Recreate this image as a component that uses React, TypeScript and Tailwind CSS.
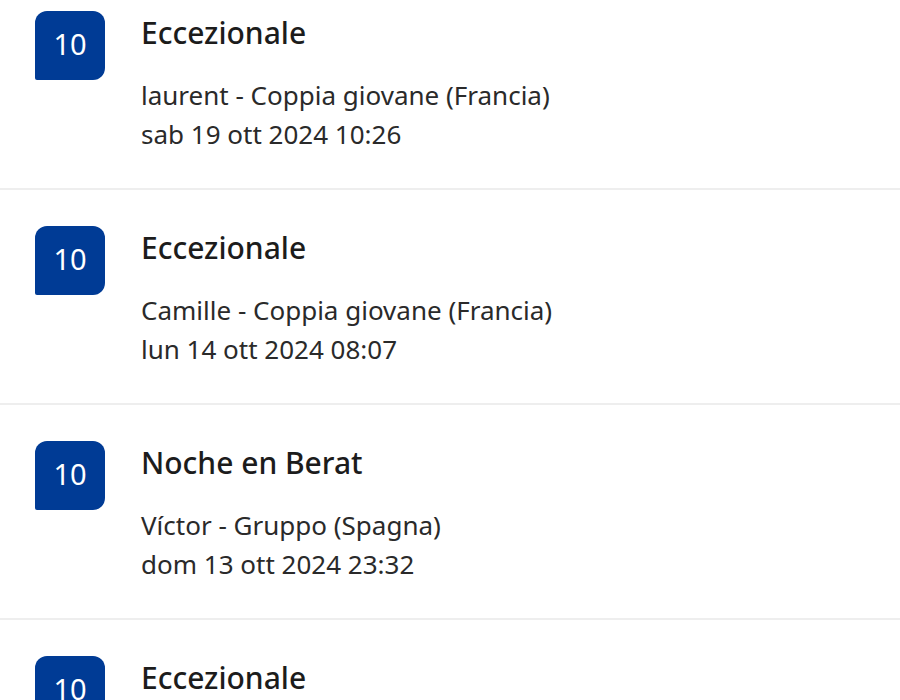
const reviews = [
  { score: 10, title: 'Eccezionale', author: 'laurent - Coppia giovane (Francia)', date: 'sab 19 ott 2024 10:26' },
  { score: 10, title: 'Eccezionale', author: 'Camille - Coppia giovane (Francia)', date: 'lun 14 ott 2024 08:07' },
  { score: 10, title: 'Noche en Berat', author: 'Víctor - Gruppo (Spagna)', date: 'dom 13 ott 2024 23:32' },
  { score: 10, title: 'Eccezionale', author: 'Marie - Famiglia (Francia)', date: 'ven 11 ott 2024 19:45' },
];

function ScoreBadge({ score }: { score: number }) {
  return (
    <div className="w-[70px] h-[69px] shrink-0 flex items-center justify-center pb-[4px] bg-[#003b95] text-white text-[29px] rounded-t-[12px] rounded-br-[12px] rounded-bl-[2px]">
      {score}
    </div>
  );
}

export default function App() {
  return (
    <div
      className="w-[900px] h-[700px] overflow-hidden bg-white"
      style={{ fontFamily: '"Noto Sans", "Open Sans", sans-serif' }}
    >
      <div className="-mt-[25px]">
        {reviews.map((r, i) => (
          <div key={i} className="h-[215px] flex pl-[35px] pt-[36px] border-b-2 border-[#eeeeee]">
            <ScoreBadge score={r.score} />
            <div className="ml-[36px] flex flex-col">
              <div className="mt-[4px] text-[30px] leading-[36px] font-medium text-[#1c1c1c] whitespace-nowrap">{r.title}</div>
              <div className="mt-[25px] text-[26px] leading-[39px] text-[#2a2a2a] whitespace-nowrap">
                <div>{r.author}</div>
                <div>{r.date}</div>
              </div>
            </div>
          </div>
        ))}
      </div>
    </div>
  );
}
